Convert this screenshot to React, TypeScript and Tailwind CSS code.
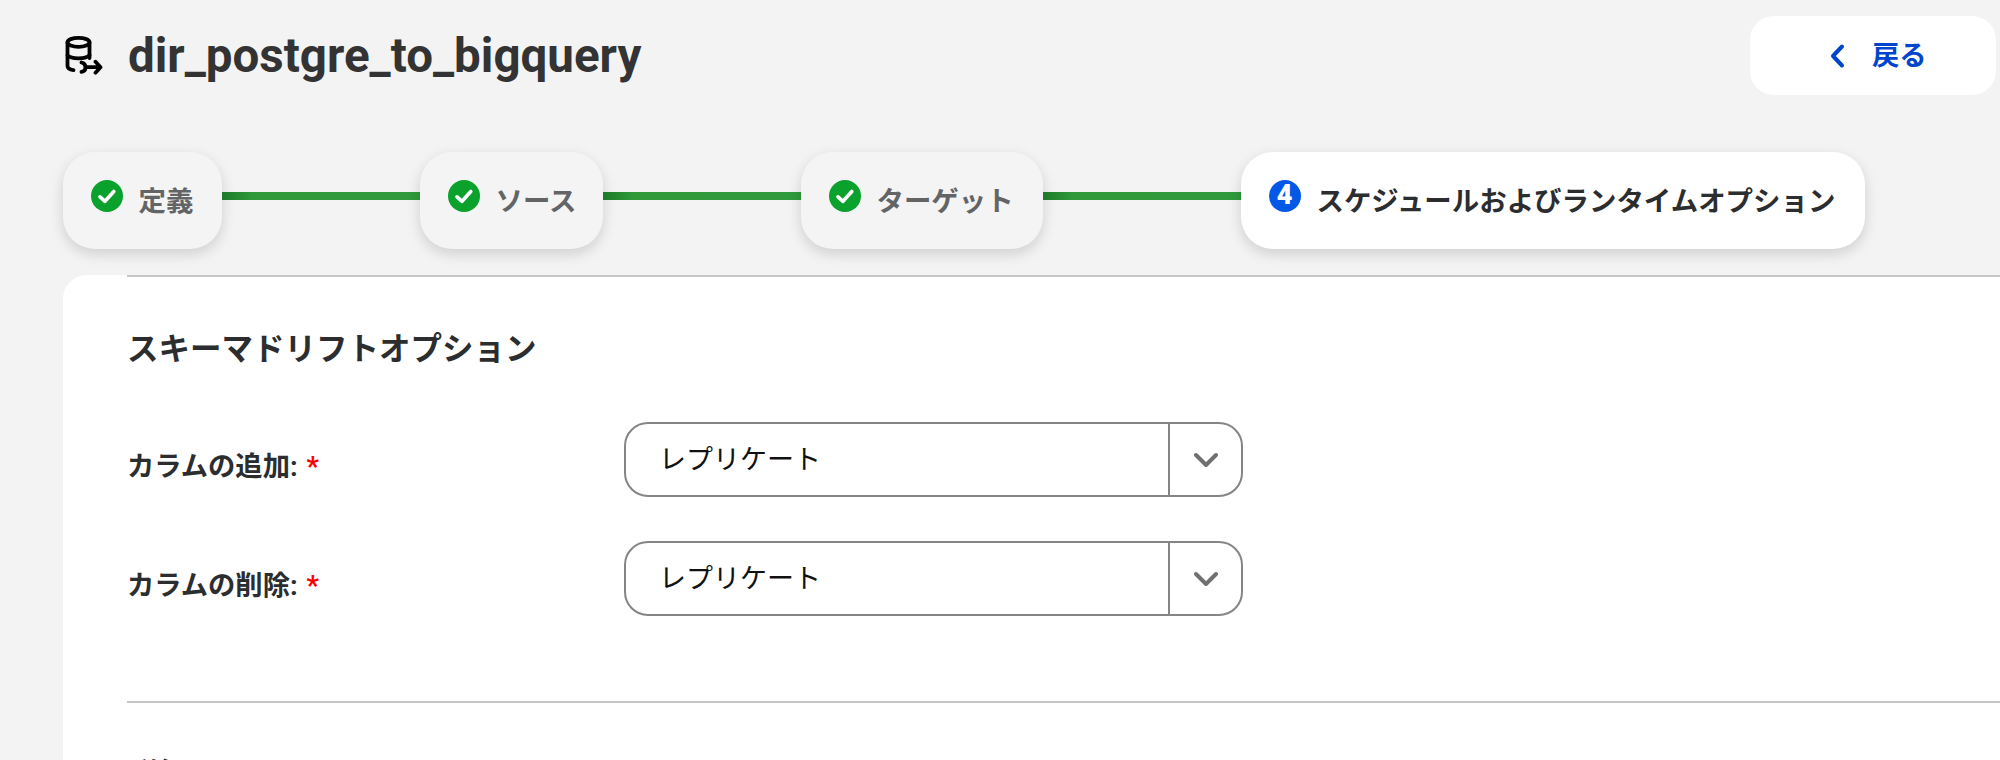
import { useState } from "react"

interface Step {
  label: string
  width: string
  done: boolean
}

interface Field {
  id: string
  label: string
}

const STEPS: Step[] = [
  { label: "定義", width: "w-[159px]", done: true },
  { label: "ソース", width: "w-[183px]", done: true },
  { label: "ターゲット", width: "w-[242px]", done: true },
  { label: "スケジュールおよびランタイムオプション", width: "w-[624px]", done: false },
]

const FIELDS: Field[] = [
  { id: "add", label: "カラムの追加:" },
  { id: "drop", label: "カラムの削除:" },
]

function DatabaseIcon() {
  return (
    <svg width="40" height="42" viewBox="0 0 40 42" fill="none" stroke="#000" strokeWidth="3.8" strokeLinecap="round">
      <ellipse cx="15.500" cy="7.300" rx="11" ry="4.500" />
      <path d="M4.500 7.500v23.500c0 2.400 2.500 3.600 6 4.200" />
      <path d="M26.500 7.500v15.500" />
      <path d="M4.500 20.300c2 2.400 6 3 11 3s9-.6 11-3" />
      <path d="M18.500 27.500c2.800.600 4 2.400 4 4.700s-1.200 4.200-4 4.700M22.500 32.200h15M32.500 26.700l5 5.500-5 5.500" strokeLinejoin="round" />
    </svg>
  )
}

function StepBadge({ done, num }: { done: boolean; num: number }) {
  if (!done) {
    return (
      <span className="w-8 h-8 shrink-0 rounded-full bg-[#0358e5] text-white text-[27px] font-black leading-[31px] text-center">
        {num}
      </span>
    )
  }
  return (
    <span className="w-8 h-8 shrink-0 rounded-full bg-[#0aa12d]">
      <svg width="32" height="32" viewBox="0 0 32 32" fill="none" stroke="white" strokeWidth="3.6" strokeLinecap="round" strokeLinejoin="round">
        <path d="M9 16.800l5 4.500 8.800-9.800" />
      </svg>
    </span>
  )
}

export default function App() {
  const [values] = useState<Record<string, string>>({
    add: "レプリケート",
    drop: "レプリケート",
  })

  return (
    <div className="w-full h-[760px] overflow-hidden bg-[#f3f3f3] text-[#2b2d2f] font-[Roboto,'Noto_Sans_CJK_JP',sans-serif]">
      {/* ── HEADER ── */}
      <header className="h-[152px] flex items-start justify-between pl-[63px] pr-1 pt-4">
        <div className="flex items-center h-20">
          <DatabaseIcon />
          <h1 className="ml-[25px] text-[47.500px] leading-[56px] font-bold text-[#333] whitespace-nowrap">
            dir_postgre_to_bigquery
          </h1>
        </div>
        <button className="w-[246px] h-[79px] rounded-3xl bg-white flex items-center pl-[80px] text-[#0045cc] text-[27.300px] font-bold">
          <svg width="16" height="26" viewBox="0 0 16 26" fill="none" stroke="currentColor" strokeWidth="4" strokeLinecap="round" strokeLinejoin="round">
            <path d="M12 3.500L3 13l9 9.500" />
          </svg>
          <span className="ml-[26px] leading-[40px]">戻る</span>
        </button>
      </header>

      {/* ── STEPS ── */}
      <nav className="flex items-start pl-[63px] h-[123px]">
        {STEPS.map((step, i) => (
          <div key={step.label} className="flex items-start">
            {i > 0 && (
              <div className="w-[198px] h-2 mt-10 bg-linear-to-r from-[#1c7a28] via-[#2f993a] via-15% to-[#2f9a3c]" />
            )}
            <div
              className={
                "h-[97px] rounded-[32px] pt-7 pl-[27.500px] flex items-start shadow-[0_5px_14px_rgba(0,0,0,0.15)] " +
                step.width +
                (step.done ? " bg-[#f4f4f4] text-[#636466]" : " bg-white")
              }
            >
              <StepBadge done={step.done} num={i + 1} />
              <span className="ml-4 mt-[2px] text-[27.450px] leading-[40px] font-bold whitespace-nowrap">
                {step.label}
              </span>
            </div>
          </div>
        ))}
      </nav>

      {/* ── OPTIONS ── */}
      <main className="ml-[63px] pl-16 h-[485px] rounded-tl-3xl bg-white overflow-hidden">
        <section className="h-[426px] border-t-2 border-[#c6c6c6]">
          <h2 className="pt-[50px] text-[31.500px] leading-[46px] font-bold">
            スキーマドリフトオプション
          </h2>
          <div className="mt-[49px] flex flex-col gap-[44px]">
            {FIELDS.map(f => (
              <div key={f.id} className="flex">
                <label className="w-[497px] pt-[25px] text-[27.300px] leading-[40px] font-bold">
                  {f.label} <span className="ml-[2px] text-[#f00]">*</span>
                </label>
                <button className="w-[619px] h-[75px] flex items-stretch rounded-3xl border-2 border-[#858585] text-left text-[27px] text-[#111]">
                  <span className="flex-1 pl-[33px] pt-[16px] leading-[40px]">{values[f.id]}</span>
                  <span className="w-[73px] border-l-2 border-[#858585] flex items-center justify-center">
                    <svg width="24" height="16" viewBox="0 0 24 16" fill="none" stroke="#707070" strokeWidth="4" strokeLinecap="round" strokeLinejoin="round">
                      <path d="M2 3l10 10L22 3" />
                    </svg>
                  </span>
                </button>
              </div>
            ))}
          </div>
        </section>
        <section className="border-t-2 border-[#c6c6c6]">
          <h2 className="pt-[50px] text-[31.500px] leading-[46px] font-bold">詳細</h2>
        </section>
      </main>
    </div>
  )
}
